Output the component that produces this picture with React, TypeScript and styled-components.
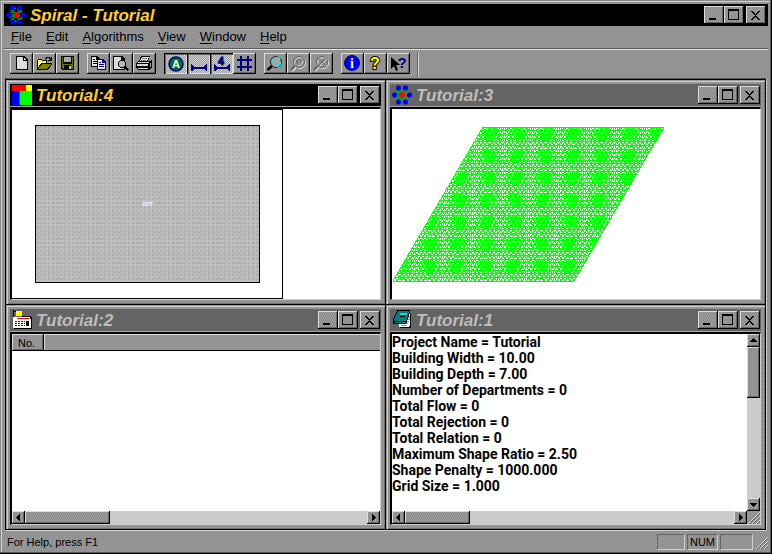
import React from "react";
import styled, { createGlobalStyle, css } from "styled-components";

const GlobalStyle = createGlobalStyle`
  * { box-sizing: border-box; }
  html, body { margin: 0; padding: 0; }
  body { font-family: "Liberation Sans", sans-serif; color: #000; background: #949494; }
  button { font: inherit; color: inherit; margin: 0; padding: 0; border: 0; border-radius: 0; }
`;

const brushed = css`
  background-color: #949494;
  background-image: repeating-conic-gradient(#8c8c8c 0 25%, #9b9b9b 0 50%);
  background-size: 2px 4px;
`;

const dithered = css`
  background-image: repeating-conic-gradient(#9c9c9c 0 25%, #d2d2d2 0 50%);
  background-size: 2px 2px;
`;

const raised = css`
  ${brushed}
  box-shadow: inset -1px -1px 0 #000, inset 1px 1px 0 #dcdcdc, inset -2px -2px 0 #666;
`;

/* ---------- main window ---------- */

const AppWindow = styled.main`
  ${brushed}
  min-height: 100vh;
  display: flex;
  flex-direction: column;
  padding: 4px 4px 2px;
  box-shadow: inset -1px -1px 0 #000, inset -2px -2px 0 #555, inset 1px 1px 0 #8a8a8a, inset 2px 2px 0 #d0d0d0;
`;

const TitleBar = styled.header<{ $active?: boolean; $child?: boolean }>`
  display: flex;
  align-items: center;
  flex: none;
  height: 22px;
  padding: ${(p) => (p.$child ? "0 1px 0 2px" : "0 2px")};
  background: ${(p) => (p.$active ? "#000" : "#646464")};
  color: ${(p) => (p.$active ? "#ffcc33" : "#bdbdbd")};
`;

const Title = styled.h1`
  flex: 1;
  margin: 0;
  padding: 1px 0 0 4px;
  font: italic bold 17px/20px "Liberation Sans", sans-serif;
  white-space: nowrap;
`;

const CaptionButtons = styled.div`
  display: flex;
`;

const CaptionButton = styled.button<{ $apart?: boolean }>`
  ${raised}
  width: 20px;
  height: 18px;
  margin-left: ${(p) => (p.$apart ? "2px" : "0")};
  display: flex;
`;

const Art = styled.svg`
  display: block;
  flex: none;
  overflow: visible;
`;

const MenuBar = styled.nav`
  display: flex;
  flex: none;
  height: 22px;
`;

const MenuItem = styled.button`
  background: none;
  padding: 0 7px;
  font-size: 13px;
  line-height: 20px;
`;

const Key = styled.span`
  text-decoration: underline;
  text-underline-offset: 2px;
`;

const ToolBar = styled.div`
  display: flex;
  align-items: flex-start;
  flex: none;
  height: 31px;
  padding: 3px 6px 0;
  border-top: 1px solid #5c5c5c;
  box-shadow: inset 0 1px 0 #e4e4e4;
`;

const ToolGroup = styled.div`
  display: flex;
  margin-right: 8px;
  padding-top: 1px;
`;

const ToolButton = styled.button<{ $pressed?: boolean }>`
  ${raised}
  width: 23px;
  height: 21px;
  ${(p) =>
    p.$pressed &&
    css`
      ${dithered}
      box-shadow: inset 1px 1px 0 #000, inset 2px 2px 0 #666, inset -1px -1px 0 #dcdcdc;
    `}
`;

const ToolEdge = styled.div`
  width: 2px;
  align-self: stretch;
  margin-left: -1px;
  border-left: 1px solid #666;
  border-right: 1px solid #d4d4d4;
`;

/* ---------- child windows ---------- */

const Workspace = styled.div`
  flex: 1;
  min-height: 0;
  display: grid;
  grid-template-columns: minmax(0, 1fr) minmax(0, 1fr);
  grid-template-rows: minmax(0, 1fr) minmax(0, 1fr);
  gap: 1px;
  margin: 0 2px 0 1px;
  border: 1px solid #000;
  background: #000;
  box-shadow: 0 -1px 0 #555, 1px 0 0 #d0d0d0, 0 1px 0 #d0d0d0;
`;

const ChildWindow = styled.section`
  ${brushed}
  min-width: 0;
  min-height: 0;
  display: flex;
  flex-direction: column;
  padding: 4px;
  box-shadow: inset 1px 1px 0 #9a9a9a, inset 2px 2px 0 #d0d0d0, inset -1px -1px 0 #707070;
`;

const Client = styled.div`
  flex: 1;
  min-height: 0;
  display: flex;
  flex-direction: column;
  margin-top: 1px;
  border: solid;
  border-width: 2px 1px 1px 2px;
  border-color: #000 #d0d0d0 #d0d0d0 #000;
  background: #fff;
  box-shadow: 0 -1px 0 #a8a8a8;
  overflow: hidden;
`;

const Sheet = styled.div`
  width: 271px;
  flex: 1;
  padding: 15px 22px;
  border: 1px solid #000;
  border-left: 0;
  display: flex;
`;

const Building = styled.div`
  flex: 1;
  border: 1px solid #000;
  margin-left: 1px;
  background-color: #bebebe;
  background-image: radial-gradient(circle at 1px 1px, #aeaeae 0 1px, transparent 1px),
    radial-gradient(circle at 3px 2px, #b0b0b0 0 1px, transparent 1px);
  background-size: 4px 4px, 5px 5px;
  display: flex;
  align-items: center;
  justify-content: center;
  color: #fff;
  font: bold 5px/8px "Liberation Sans", sans-serif;
`;

const Body = styled.div`
  flex: 1;
  min-height: 0;
  display: flex;
`;

const Grid = styled.table`
  width: 100%;
  border-collapse: separate;
  border-spacing: 0;
  align-self: flex-start;
  font-size: 11px;
`;

const HeadCell = styled.th<{ $narrow?: boolean }>`
  ${raised}
  width: ${(p) => (p.$narrow ? "32px" : "auto")};
  height: 17px;
  padding: 1px 0 0 6px;
  font-weight: normal;
  line-height: 16px;
  text-align: left;
  ${(p) => !p.$narrow && "box-shadow: inset 0 -1px 0 #000, inset 1px 1px 0 #dcdcdc;"}
`;

const Report = styled.div`
  flex: 1;
  min-width: 0;
  font: 700 14px/16px Roboto, "Liberation Sans", sans-serif;
`;

const ReportLine = styled.p`
  margin: 0;
  white-space: nowrap;
`;

const Scroll = styled.div<{ $vertical?: boolean }>`
  flex: none;
  display: flex;
  flex-direction: ${(p) => (p.$vertical ? "column" : "row")};
  ${(p) => (p.$vertical ? "width: 13px;" : "height: 13px; flex: 1;")}
  background: #cbcbcb;
`;

const ScrollRow = styled.div`
  display: flex;
  flex: none;
`;

const ScrollArrow = styled.button`
  ${raised}
  width: 13px;
  height: 13px;
  flex: none;
`;

const Thumb = styled.div<{ $length: number; $vertical?: boolean }>`
  ${raised}
  flex: none;
  ${(p) => (p.$vertical ? "height" : "width")}: ${(p) => p.$length}px;
`;

const Track = styled.div`
  flex: 1;
`;

const GripCorner = styled.div`
  ${brushed}
  width: 13px;
  height: 13px;
`;

/* ---------- status bar ---------- */

const StatusBar = styled.footer`
  display: flex;
  align-items: center;
  flex: none;
  height: 22px;
  padding: 2px 0 0 3px;
  gap: 2px;
  font-size: 11px;
`;

const StatusText = styled.div`
  flex: 1;
`;

const Pane = styled.div<{ $width: number }>`
  width: ${(p) => p.$width}px;
  height: 16px;
  line-height: 15px;
  text-align: center;
  border: 1px solid;
  border-color: #666 #d0d0d0 #d0d0d0 #666;
`;

/* ---------- drawings ---------- */

const NAVY = "#000080";

const SpiralIcon = () => (
  <Art width="20" height="20" viewBox="0 0 20 20" aria-hidden>
    <path
      d="M3 10L6.5 3.5H13.5L17 10L13.5 16.5H6.5ZM6.5 3.5L13.5 16.5M13.5 3.5L6.5 16.5M7 5V15M13 5V15"
      stroke="#00a020"
      strokeWidth="2"
      strokeDasharray="3 1"
      fill="none"
    />
    <g fill="#0000f8">
      {[[2.5, 10], [17.5, 10], [6.5, 3], [13.5, 3], [6.5, 17], [13.5, 17]].map(([x, y]) => (
        <path key={`${x}-${y}`} d={`M${x - 1} ${y - 2.5}h2l1.5 1.5v2l-1.5 1.5h-2l-1.5 -1.5v-2z`} />
      ))}
    </g>
    <path d="M8.5 7h3v1.500h1.500v3h-1.500v1.500h-3v-1.500h-1.500v-3h1.500z" fill="#f00" />
  </Art>
);

const BlocksIcon = () => (
  <Art width="20" height="20" viewBox="0 0 20 20" shapeRendering="crispEdges" aria-hidden>
    <path d="M0 0H14V6H0Z" fill="#f00" />
    <path d="M14 0H20V6H14Z" fill="#ff0" />
    <path d="M0 6H7V20H0Z" fill="#00f" />
    <path d="M8 6H20V20H8Z" fill="#0f0" />
    <path d="M7 6H8V20H7Z" fill="#c000c0" />
  </Art>
);

const TableIcon = () => (
  <Art width="20" height="20" viewBox="0 0 20 20" shapeRendering="crispEdges" aria-hidden>
    <path d="M2 7H20V19H2Z" fill="#000" />
    <path d="M1 7H19V18H1Z" fill="#fff" />
    <path d="M1.500 0V7M2 1.500H8M10 6.500H18V9" stroke="#000" fill="none" />
    <path d="M4 1H10V6H4Z" fill="#ff0" />
    <path d="M5 8H17V9H5Z" fill="#f00" />
    <path d="M3 11.500H13M3 13.500H13M3 15.500H13" stroke="#222" strokeDasharray="2 1" />
    <path d="M14 11H17V16H14Z" fill="#000" />
  </Art>
);

const BookIcon = () => (
  <Art width="20" height="20" viewBox="0 0 20 20" shapeRendering="crispEdges" aria-hidden>
    <path d="M9 4H19V18H8Z" fill="#000" />
    <path d="M9 3H18V15L16 17H7Z" fill="#fff" />
    <path d="M14 7.500H18M13 9.500H18M12 11.500H17M9 13.500H16M9 15.500H15" stroke="#888" />
    <path d="M6 0H18L17 4L14 13H1V10Z" fill="#008080" stroke="#000" />
    <path d="M8 3H15V5H8Z" fill="#40c8c8" />
    <path d="M8 6.500H13M2 11.500H14" stroke="#000" />
  </Art>
);

const CaptionArt: Record<string, React.ReactNode> = {
  Minimize: <path d="M5 12H12V14H5Z" />,
  Maximize: <path d="M4 3H15V14H4ZM5 5V13H14V5Z" fillRule="evenodd" />,
  Close: <path d="M5 5h2v1h1v1h1v1h1v-1h1v-1h1v-1h2v1h-1v1h-1v1h-1v1h-1v1h1v1h1v1h1v1h1v1h-2v-1h-1v-1h-1v-1h-1v1h-1v1h-1v1h-2v-1h1v-1h1v-1h1v-1h1v-1h-1v-1h-1v-1h-1v-1h-1z" />,
};

const Captions = () => (
  <CaptionButtons>
    {Object.keys(CaptionArt).map((name) => (
      <CaptionButton key={name} aria-label={name} $apart={name === "Close"}>
        <Art width="20" height="18" viewBox="0 0 20 18" shapeRendering="crispEdges">
          {CaptionArt[name]}
        </Art>
      </CaptionButton>
    ))}
  </CaptionButtons>
);

const SpanBar = () => (
  <path d="M4 11h1v1h1v1h1v1h10v-1h1v-1h1v-1h1v7h-1v-1h-1v-1h-11v1h-1v1h-2z" fill={NAVY} />
);

const Lens = ({ mark }: { mark?: string }) =>
  mark ? (
    <>
      {["#e0e0e0", "#606060"].map((color, i) => (
        <g key={color} transform={`translate(${1 - i} ${1 - i})`} stroke={color} fill="none">
          <circle cx="12" cy="9" r="5.500" strokeWidth="1" />
          <path d="M8 13L4 17" strokeWidth="2" />
          <path d={mark} strokeWidth="1" />
        </g>
      ))}
    </>
  ) : (
    <>
      <circle cx="12" cy="9" r="5.500" fill="#a4a4a4" stroke="#222" />
      <path d="M8 13L3.500 17" stroke="#000" strokeWidth="2.500" />
      <path d="M8 9L9 7M13 14L17 10M13 4L16 6" stroke="#00f0f0" strokeWidth="2" fill="none" />
    </>
  );

const letter = { fontFamily: '"Liberation Sans", sans-serif', fontWeight: 700, textAnchor: "middle" as const };

type Tool = { name: string; art: React.ReactNode; pressed?: boolean; disabled?: boolean; smooth?: boolean };

const tools: Tool[][] = [
  [
    {
      name: "New",
      art: (
        <>
          <path d="M6 3H14L18 7V17H6Z" fill="#000" />
          <path d="M7 4H13V8H17V16H7Z" fill="#dedede" />
          <path d="M14 5V7H16Z" fill="#dedede" />
        </>
      ),
    },
    {
      name: "Open",
      art: (
        <>
          <path d="M4 7H5V6H9V7H14V10H19V11L15 17H4Z" fill="#000" />
          <path d="M5 7H9V8H13V10H8L5 15Z" fill="#ffff60" />
          <path d="M9 11H18L14 16H5Z" fill="#808000" />
          <path d="M12 5.500H13V4.500H16V5.500H17V7M15 7.500H19M18.500 4V7" stroke="#000" fill="none" />
        </>
      ),
    },
    {
      name: "Save",
      art: (
        <>
          <path d="M5 3H18V17H6L5 16Z" fill="#000" />
          <path d="M6 4H7V11H16V4H17V16H7L6 15Z" fill="#707000" />
          <path d="M8 4H15V9H8Z" fill="#a8a8a8" />
          <path d="M8 12H15V16H8Z" fill="#000" />
          <path d="M13 13H15V16H13Z" fill="#bbb" />
        </>
      ),
    },
  ],
  [
    {
      name: "Copy",
      art: (
        <>
          <path d="M4 3H10L13 6V14H4Z" fill="#000" />
          <path d="M5 4H9V7H12V13H5Z" fill="#e8e8e8" />
          <path d="M6 6.500H8M6 8.500H11M6 10.500H11" stroke="#000" />
          <path d="M10 6H16L19 9V17H10Z" fill={NAVY} />
          <path d="M11 7H15V10H18V16H11Z" fill="#e8e8e8" />
          <path d="M12 9.500H14M12 11.500H17M12 13.500H17" stroke={NAVY} />
        </>
      ),
    },
    {
      name: "Print Preview",
      art: (
        <>
          <path d="M3 3H12L15 6V17H3Z" fill="#000" />
          <path d="M4 4H11V7H14V16H4Z" fill="#dedede" />
          <circle cx="12" cy="11" r="3.500" fill="#b8b8b8" stroke="#000" />
          <path d="M14.500 13.500L18.500 17.500" stroke="#000" strokeWidth="2" />
        </>
      ),
    },
    {
      name: "Print",
      art: (
        <>
          <path d="M8 3H17L15 9H6Z" fill="#000" />
          <path d="M9 4H16L14 8H7Z" fill="#eee" />
          <path d="M5 8H17L19 6V14L16 17H5L3 15V10Z" fill="#000" />
          <path d="M5 9H16V10H4Z" fill="#d8d8d8" />
          <path d="M4 11H15V13H4Z" fill="#d8d8d8" />
          <path d="M10 12H13V13H10Z" fill="#ff0" />
          <path d="M5 15H15V16H5Z" fill="#d8d8d8" />
          <path d="M17 9.500V14" stroke="#aaa" />
          <path d="M9 5.500H14M8 7H13" stroke="#777" />
        </>
      ),
    },
  ],
  [
    {
      name: "Automatic",
      pressed: true,
      smooth: true,
      art: (
        <>
          <circle cx="12" cy="11" r="7" fill="#007030" stroke={NAVY} strokeWidth="1.500" />
          <text x="12" y="15" fontSize="11" fill="#fff" {...letter}>A</text>
        </>
      ),
    },
    { name: "Distance", pressed: true, art: <SpanBar /> },
    {
      name: "Distance Value",
      pressed: true,
      art: (
        <>
          <SpanBar />
          <text x="11" y="12" fontSize="10" fill={NAVY} stroke={NAVY} {...letter}>4</text>
        </>
      ),
    },
    { name: "Grid", art: <path d="M7 3h2v3h5v-3h2v3h3v2h-3v5h3v2h-3v3h-2v-3h-5v3h-2v-3h-3v-2h3v-5h-3v-2h3zM9 8v5h5v-5z" fillRule="evenodd" fill={NAVY} /> },
  ],
  [
    { name: "Zoom", smooth: true, art: <Lens /> },
    { name: "Zoom Previous", disabled: true, smooth: true, art: <Lens mark="M9.500 9H14.500V7H10V11H14" /> },
    { name: "Zoom All", disabled: true, smooth: true, art: <Lens mark="M9 6L15 12M15 6L9 12" /> },
  ],
  [
    {
      name: "Information",
      smooth: true,
      art: (
        <>
          <circle cx="11" cy="10" r="7.500" fill="#0000f0" stroke={NAVY} />
          <text x="11" y="15" fontSize="14" fill="#fff" {...letter} fontFamily='"Liberation Serif", serif'>i</text>
        </>
      ),
    },
    {
      name: "Help",
      smooth: true,
      art: (
        <text x="11" y="16" fontSize="16" fill="#ff0" stroke="#000" strokeWidth="2" paintOrder="stroke" {...letter}>?</text>
      ),
    },
    {
      name: "Context Help",
      smooth: true,
      art: (
        <>
          <path d="M4 4V16L7 13L9 18L11 17L9 12H13Z" fill="#000" />
          <text x="15" y="15" fontSize="15" fill={NAVY} {...letter}>?</text>
        </>
      ),
    },
  ],
];

/* A sheared triangular lattice: rows, one family of diagonals along the slant, one against it. */
const Mesh = () => {
  const cells = 42;
  const left = 1;
  const top = 18;
  const width = 181;
  const height = 154;
  const slant = 90;
  const at = (a: number, b: number) => `${left + width * a + slant * b} ${top + height * (1 - b)}`;
  let d = "";
  for (let i = 0; i <= cells; i++) {
    const t = i / cells;
    d += `M${at(0, t)}L${at(1, t)}M${at(t, 0)}L${at(t, 1)}M${at(t, 0)}L${at(0, t)}M${at(1, t)}L${at(t, 1)}`;
  }
  return (
    <Art width="368" height="189" viewBox="0 0 368 189" shapeRendering="crispEdges" role="img" aria-label="Layout mesh">
      <path d={d} stroke="#00ff00" fill="none" />
    </Art>
  );
};

const arrows: Record<string, string> = {
  Left: "M8 3V10H7V9H6V8H5V7H4V6H5V5H6V4H7V3Z",
  Right: "M5 3V10H6V9H7V8H8V7H9V6H8V5H7V4H6V3Z",
  Up: "M3 8H10V7H9V6H8V5H7V4H6V5H5V6H4V7H3Z",
  Down: "M3 5H10V6H9V7H8V8H7V9H6V8H5V7H4V6H3Z",
};

const Arrow = ({ to }: { to: string }) => (
  <ScrollArrow aria-label={`Scroll ${to.toLowerCase()}`}>
    <Art width="13" height="13" viewBox="0 0 13 13" shapeRendering="crispEdges">
      <path d={arrows[to]} />
    </Art>
  </ScrollArrow>
);

const ScrollBar = ({ length, vertical }: { length: number; vertical?: boolean }) => (
  <Scroll $vertical={vertical}>
    <Arrow to={vertical ? "Up" : "Left"} />
    <Thumb $length={length} $vertical={vertical} />
    <Track />
    <Arrow to={vertical ? "Down" : "Right"} />
  </Scroll>
);

const Grip = ({ size }: { size: number }) => (
  <Art width={size} height={size} viewBox="0 0 13 13" aria-hidden>
    <path d="M1 13L13 1M5 13L13 5M9 13L13 9" stroke="#e0e0e0" />
    <path d="M2 13L13 2M6 13L13 6M10 13L13 10" stroke="#606060" />
  </Art>
);

const Child = ({ title, icon, active, children }: { title: string; icon: React.ReactNode; active?: boolean; children: React.ReactNode }) => (
  <ChildWindow aria-label={title}>
    <TitleBar $child $active={active}>
      {icon}
      <Title as="h2">{title}</Title>
      <Captions />
    </TitleBar>
    <Client>{children}</Client>
  </ChildWindow>
);

const menus = ["File", "Edit", "Algorithms", "View", "Window", "Help"];

const report = [
  "Project Name = Tutorial",
  "Building Width = 10.00",
  "Building Depth = 7.00",
  "Number of Departments = 0",
  "Total Flow = 0",
  "Total Rejection = 0",
  "Total Relation = 0",
  "Maximum Shape Ratio = 2.50",
  "Shape Penalty = 1000.000",
  "Grid Size = 1.000",
];

export default function App() {
  return (
    <>
      <GlobalStyle />
      <AppWindow>
        <TitleBar $active>
          <SpiralIcon />
          <Title>Spiral - Tutorial</Title>
          <Captions />
        </TitleBar>
        <MenuBar aria-label="Main menu">
          {menus.map((m) => (
            <MenuItem key={m}>
              <Key>{m[0]}</Key>
              {m.slice(1)}
            </MenuItem>
          ))}
        </MenuBar>
        <ToolBar role="toolbar" aria-label="Tools">
          {tools.map((group, i) => (
            <ToolGroup key={i}>
              {group.map((t) => (
                <ToolButton key={t.name} aria-label={t.name} aria-pressed={t.pressed} disabled={t.disabled} $pressed={t.pressed}>
                  <Art width="23" height="21" viewBox="0 0 23 21" shapeRendering={t.smooth ? "auto" : "crispEdges"}>
                    {t.art}
                  </Art>
                </ToolButton>
              ))}
            </ToolGroup>
          ))}
          <ToolEdge />
        </ToolBar>
        <Workspace>
          <Child title="Tutorial:4" icon={<BlocksIcon />} active>
            <Sheet>
              <Building>OUT</Building>
            </Sheet>
          </Child>
          <Child title="Tutorial:3" icon={<SpiralIcon />}>
            <Mesh />
          </Child>
          <Child title="Tutorial:2" icon={<TableIcon />}>
            <Body>
              <Grid>
                <thead>
                  <tr>
                    <HeadCell $narrow scope="col">No.</HeadCell>
                    <HeadCell aria-label="Department" />
                  </tr>
                </thead>
              </Grid>
            </Body>
            <ScrollRow>
              <ScrollBar length={85} />
            </ScrollRow>
          </Child>
          <Child title="Tutorial:1" icon={<BookIcon />}>
            <Body>
              <Report>
                {report.map((line) => (
                  <ReportLine key={line}>{line}</ReportLine>
                ))}
              </Report>
              <ScrollBar vertical length={51} />
            </Body>
            <ScrollRow>
              <ScrollBar length={65} />
              <GripCorner>
                <Grip size={13} />
              </GripCorner>
            </ScrollRow>
          </Child>
        </Workspace>
        <StatusBar>
          <StatusText>For Help, press F1</StatusText>
          <Pane $width={28} />
          <Pane $width={31}>NUM</Pane>
          <Pane $width={33} />
          <Grip size={13} />
        </StatusBar>
      </AppWindow>
    </>
  );
}
